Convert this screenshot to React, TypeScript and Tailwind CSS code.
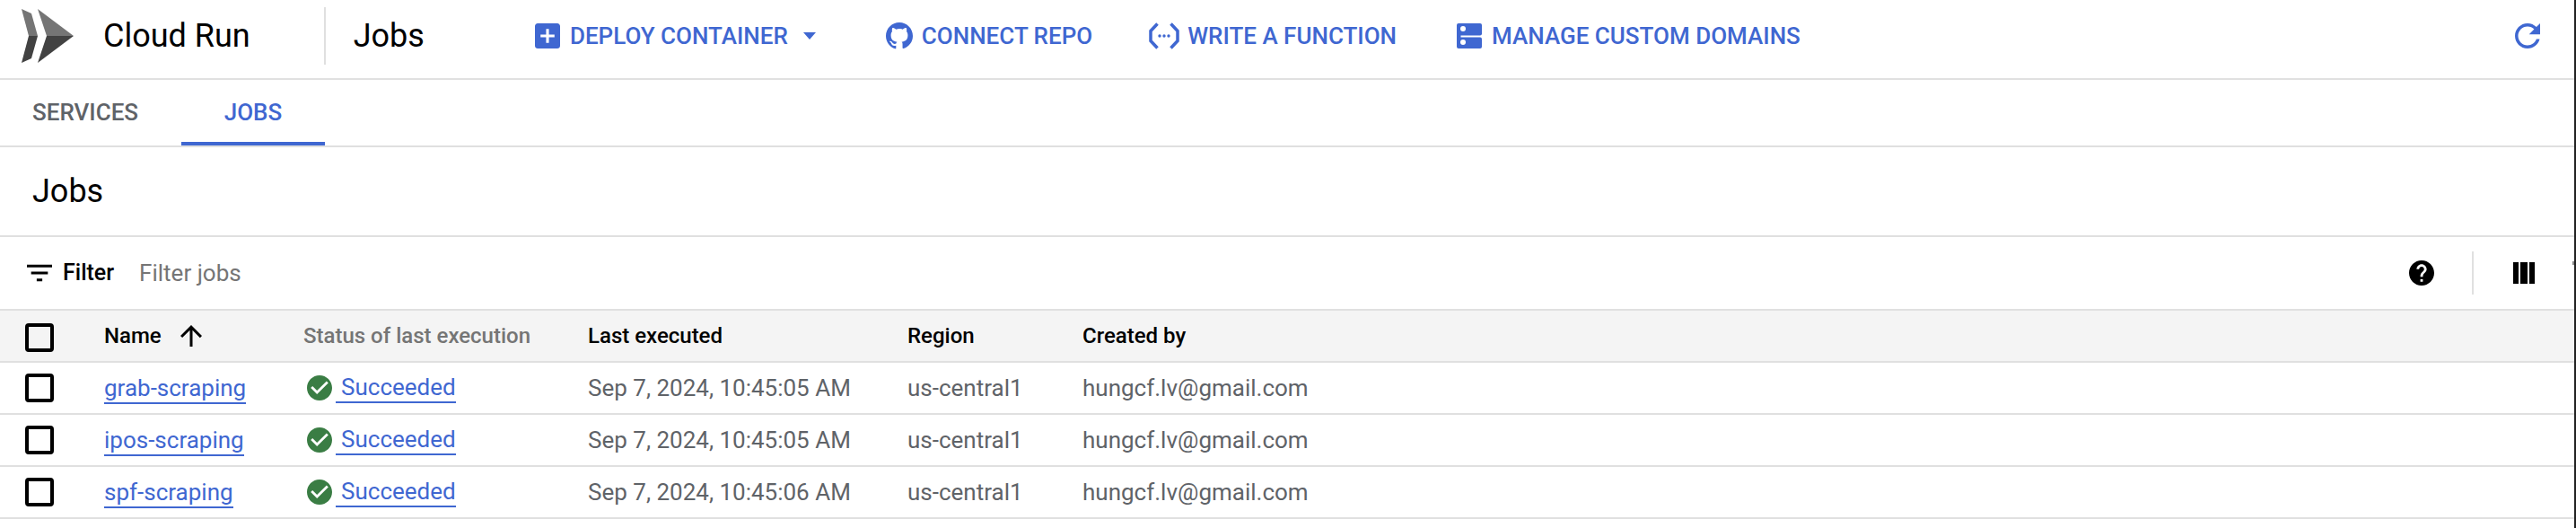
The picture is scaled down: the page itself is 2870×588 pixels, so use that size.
import type { ReactNode } from 'react'

const BLUE = 'text-[#3f67d1]'

function MaterialIcon({ d, box, className }: { d: string; box: string; className: string }) {
  return (
    <svg viewBox={box} fill="currentColor" className={className}>
      <path d={d} />
    </svg>
  )
}

const ICONS = {
  addBox: 'M19 3H5c-1.11 0-2 .9-2 2v14c0 1.1.89 2 2 2h14c1.1 0 2-.9 2-2V5c0-1.1-.9-2-2-2zm-2 10h-4v4h-2v-4H7v-2h4V7h2v4h4v2z',
  github: 'M12 1C5.9 1 1 5.9 1 12c0 4.9 3.2 9 7.5 10.5.5.1.8-.2.8-.5v-2.100c-3.100.7-3.700-1.300-3.700-1.300-.5-1.300-1.200-1.600-1.200-1.600-1-.7.1-.7.1-.7 1.100.1 1.700 1.100 1.700 1.100 1 1.700 2.600 1.200 3.200.9.1-.7.4-1.200.7-1.500-2.400-.3-5-1.200-5-5.400 0-1.200.4-2.200 1.100-3-.1-.3-.5-1.400.1-2.900 0 0 .9-.3 3 1.100.9-.2 1.800-.4 2.700-.4s1.800.1 2.700.4c2.100-1.400 3-1.100 3-1.100.6 1.500.2 2.600.1 2.900.7.8 1.100 1.800 1.100 3 0 4.200-2.600 5.100-5 5.400.4.300.7 1 .7 2v3c0 .3.2.6.8.5C19.800 21 23 16.900 23 12c0-6.100-4.900-11-11-11z',
  refresh: 'M17.65 6.35C16.2 4.9 14.21 4 12 4c-4.42 0-7.99 3.58-7.99 8s3.57 8 7.99 8c3.73 0 6.84-2.55 7.73-6h-2.08c-.82 2.33-3.04 4-5.65 4-3.31 0-6-2.69-6-6s2.69-6 6-6c1.66 0 3.14.69 4.22 1.78L13 11h7V4l-2.35 2.35z',
  filter: 'M10 18h4v-2h-4v2zM3 6v2h18V6H3zm3 7h12v-2H6v2z',
  help: 'M12 2C6.48 2 2 6.48 2 12s4.48 10 10 10 10-4.48 10-10S17.52 2 12 2zm1 17h-2v-2h2v2zm2.07-7.75l-.9.92C13.45 12.9 13 13.5 13 15h-2v-.5c0-1.1.45-2.1 1.17-2.83l1.24-1.26c.37-.36.59-.86.59-1.41 0-1.1-.9-2-2-2s-2 .9-2 2H8c0-2.21 1.79-4 4-4s4 1.79 4 4c0 .88-.36 1.68-.93 2.25z',
  check: 'M12 2C6.48 2 2 6.48 2 12s4.48 10 10 10 10-4.48 10-10S17.52 2 12 2zm-2 15l-5-5 1.41-1.41L10 14.17l7.59-7.59L19 8l-9 9z',
  arrowUp: 'M4 12l1.41 1.41L11 7.83V20h2V7.83l5.58 5.59L20 12l-8-8-8 8z',
}

function ProductLogo() {
  return (
    <svg viewBox="0 0 58 60" className="h-[60px] w-[58px]">
      <polygon points="0,0 11,5 18,30 8,30" fill="#757575" />
      <polygon points="0,60 11,55 18,30 8,30" fill="#424242" />
      <polygon points="18,0 58,30 28,30" fill="#757575" />
      <polygon points="18,60 58,30 28,30" fill="#424242" />
    </svg>
  )
}

function FunctionIcon() {
  return (
    <svg viewBox="0 0 34 30" className="h-[30px] w-[34px]">
      <path d="M9.500 1.500 2 9.500v11l7.500 8" fill="none" stroke="currentColor" strokeWidth="3.500" />
      <path d="M24.500 1.500 32 9.500v11l-7.500 8" fill="none" stroke="currentColor" strokeWidth="3.500" />
      <circle cx="12" cy="15" r="1.700" fill="currentColor" />
      <circle cx="17" cy="15" r="1.700" fill="currentColor" />
      <circle cx="22" cy="15" r="1.700" fill="currentColor" />
    </svg>
  )
}

function DomainsIcon() {
  return (
    <svg viewBox="0 0 28 28" className="h-7 w-7" fill="currentColor">
      <rect x="0" y="0" width="28" height="13.500" rx="2" />
      <rect x="0" y="15.500" width="28" height="12.500" rx="2" />
      <rect x="0" y="10" width="4.500" height="8" />
      <circle cx="7" cy="6" r="3" fill="#fff" />
      <circle cx="7" cy="21" r="3" fill="#fff" />
    </svg>
  )
}

function ToolbarAction({ icon, label, className }: { icon: ReactNode; label: string; className: string }) {
  return (
    <div className={`flex items-center ${className}`}>
      {icon}
      <span className="text-[26px] font-medium">{label}</span>
    </div>
  )
}

function Checkbox() {
  return <span className="block h-8 w-8 rounded-[4px] border-[4px] border-black" />
}

const JOBS = [
  { name: 'grab-scraping', executed: 'Sep 7, 2024, 10:45:05 AM' },
  { name: 'ipos-scraping', executed: 'Sep 7, 2024, 10:45:05 AM' },
  { name: 'spf-scraping', executed: 'Sep 7, 2024, 10:45:06 AM' },
]

const GRID = 'grid grid-cols-[116px_222px_317px_356px_195px_1fr] items-center'

export default function App() {
  return (
    <div className="relative h-[588px] w-[2870px] overflow-hidden border-r-2 border-[#222222] bg-white font-['Roboto',sans-serif] text-[26px]">
      <header className="flex h-[89px] items-center border-b-2 border-[#e0e0e0] pb-[7px] pr-[38px]">
        <div className="ml-6 mr-[33px]"><ProductLogo /></div>
        <span className="text-[36px] text-black">Cloud Run</span>
        <div className="ml-[82px] mr-[31px] h-[64px] w-[2px] bg-[#e0e0e0]" />
        <span className="text-[36px] text-black">Jobs</span>
        <div className={`ml-[123px] flex items-center ${BLUE}`}>
          <ToolbarAction
            className="gap-[11px]"
            label="DEPLOY CONTAINER"
            icon={<MaterialIcon d={ICONS.addBox} box="3 3 18 18" className="h-7 w-7" />}
          />
          <span className="ml-[17px] h-0 w-0 border-x-[7px] border-t-[8px] border-x-transparent border-t-[#3f67d1]" />
          <ToolbarAction
            className="ml-[78px] gap-[10px]"
            label="CONNECT REPO"
            icon={<MaterialIcon d={ICONS.github} box="1 1 22 22" className="h-[30px] w-[30px]" />}
          />
          <ToolbarAction className="ml-[63px] gap-[9px]" label="WRITE A FUNCTION" icon={<FunctionIcon />} />
          <ToolbarAction className="ml-[67px] gap-[11px]" label="MANAGE CUSTOM DOMAINS" icon={<DomainsIcon />} />
        </div>
        <MaterialIcon d={ICONS.refresh} box="4 4 16 16" className={`ml-auto h-7 w-7 ${BLUE}`} />
      </header>

      <nav className="flex h-[75px] border-b-2 border-[#e0e0e0] text-[26px] font-medium">
        <div className="flex w-[202px] items-center pl-9 text-[#5f6368]">SERVICES</div>
        <div className={`flex w-[160px] items-center justify-center border-b-[4px] border-[#3f67d1] pt-[4px] ${BLUE}`}>JOBS</div>
      </nav>

      <div className="flex h-[100px] items-center border-b-2 border-[#e0e0e0] pl-9 text-[36px] text-black">Jobs</div>

      <div className="flex h-[80px] items-center pl-[30px] pr-[44px]">
        <MaterialIcon d={ICONS.filter} box="3 6 18 12" className="h-5 w-[28px] text-black" />
        <span className="ml-[12px] text-[25px] font-medium text-black">Filter</span>
        <span className="ml-[28px] text-[26px] text-[#757575]">Filter jobs</span>
        <MaterialIcon d={ICONS.help} box="2 2 20 20" className="ml-auto h-7 w-7 text-black" />
        <div className="ml-[42px] mr-[44px] h-[48px] w-[2px] bg-[#e0e0e0]" />
        <svg viewBox="0 0 24 24" fill="currentColor" className="h-6 w-6 text-black">
          <rect x="0" y="0" width="6" height="24" />
          <rect x="8" y="0" width="8" height="24" />
          <rect x="18" y="0" width="6" height="24" />
        </svg>
      </div>

      <div className={`${GRID} h-[60px] border-y-2 border-[#e0e0e0] bg-[#f4f4f4] text-[24px] font-medium text-black`}>
        <div className="pl-[28px] pt-1"><Checkbox /></div>
        <div className="flex items-center">
          Name
          <MaterialIcon d={ICONS.arrowUp} box="4 4 16 16" className="ml-[21px] h-[26px] w-[24px]" />
        </div>
        <div className="text-[#757575]">Status of last execution</div>
        <div>Last executed</div>
        <div>Region</div>
        <div>Created by</div>
      </div>

      {JOBS.map(job => (
        <div key={job.name} className={`${GRID} h-[58px] border-b-2 border-[#e0e0e0] text-[26px] text-[#5f6368]`}>
          <div className="pl-[28px]"><Checkbox /></div>
          <div>
            <span className={`inline-block border-b-2 border-[#3f67d1] leading-[31px] ${BLUE}`}>{job.name}</span>
          </div>
          <div className="flex items-center pl-[4px]">
            <MaterialIcon d={ICONS.check} box="2 2 20 20" className="h-7 w-7 text-[#3a7d44]" />
            <span className={`ml-[4px] border-b-2 border-[#3f67d1] pl-[6px] leading-[31px] ${BLUE}`}>Succeeded</span>
          </div>
          <div>{job.executed}</div>
          <div>us-central1</div>
          <div>hungcf.lv@gmail.com</div>
        </div>
      ))}

      <span className="absolute right-0 top-[291px] h-1 w-[2px] bg-[#8a8a8a]" />
    </div>
  )
}
